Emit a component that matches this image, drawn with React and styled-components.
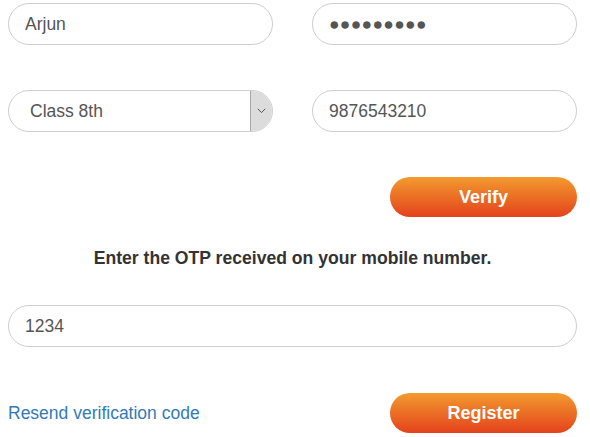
import React from "react";
import styled, { createGlobalStyle } from "styled-components";

const GlobalStyle = createGlobalStyle`
  html, body {
    margin: 0;
    padding: 0;
    background: #fff;
    font-family: "Liberation Sans", Arial, sans-serif;
  }
`;

const Page = styled.div`
  width: 569px;
  padding: 3px 13px 0 8px;
`;

const FieldGrid = styled.div`
  display: grid;
  grid-template-columns: 265px 265px;
  column-gap: 39px;
  row-gap: 45px;
`;

const TextField = styled.input`
  box-sizing: border-box;
  width: 100%;
  height: 42px;
  padding: 0 16px;
  border: 1px solid #cfcfcf;
  border-radius: 21px;
  background: #fff;
  color: #555;
  font-family: "Liberation Sans", Arial, sans-serif;
  font-size: 17.5px;
  outline: none;
  letter-spacing: ${(p) => (p.$masked ? "0.3px" : "normal")};
`;

const SelectWrap = styled.div`
  box-sizing: border-box;
  display: flex;
  height: 42px;
  border: 1px solid #cfcfcf;
  border-radius: 21px;
  overflow: hidden;
  background: #fff;
`;

const Select = styled.select`
  flex: 1;
  min-width: 0;
  appearance: none;
  border: none;
  background: transparent;
  padding: 0 0 0 21px;
  color: #555;
  font-family: "Liberation Sans", Arial, sans-serif;
  font-size: 17.5px;
  outline: none;
`;

const SelectArrow = styled.span`
  display: flex;
  align-items: center;
  justify-content: center;
  width: 20px;
  padding-right: 1px;
  background: #dcdcdc;
  border-left: 1px solid #a8a8a8;
  color: #555;
`;

const ActionRow = styled.div`
  display: flex;
  justify-content: ${(p) => p.$justify || "flex-end"};
  align-items: center;
  margin-top: ${(p) => p.$top}px;
`;

const OrangeButton = styled.button`
  width: 187px;
  height: 40px;
  border: none;
  border-radius: 20px;
  background: linear-gradient(to bottom, #f39a2f 0%, #ea6a24 55%, #e4421d 100%);
  color: #fff;
  font-family: "Liberation Sans", Arial, sans-serif;
  font-weight: bold;
  font-size: 18px;
  cursor: pointer;
`;

const Notice = styled.p`
  margin: 31px 0 37px;
  line-height: 20px;
  text-align: center;
  color: #333;
  font-weight: bold;
  font-size: 17.6px;
`;

const ResendLink = styled.a`
  color: #337ab7;
  font-size: 17.5px;
  text-decoration: none;
  cursor: pointer;
`;

function Chevron() {
  return (
    <svg width="9" height="6" viewBox="0 0 9 6" fill="none">
      <path d="M0.8 0.8 L4.5 4.6 L8.2 0.8" stroke="#555" strokeWidth="1" />
    </svg>
  );
}

export default function App() {
  return (
    <>
      <GlobalStyle />
      <Page>
        <FieldGrid>
          <TextField type="text" defaultValue="Arjun" />
          <TextField type="text" $masked defaultValue="●●●●●●●●●" />
          <SelectWrap>
            <Select defaultValue="8">
              <option value="8">Class 8th</option>
              <option value="9">Class 9th</option>
              <option value="10">Class 10th</option>
            </Select>
            <SelectArrow>
              <Chevron />
            </SelectArrow>
          </SelectWrap>
          <TextField type="tel" defaultValue="9876543210" />
        </FieldGrid>

        <ActionRow $top={45}>
          <OrangeButton type="button">Verify</OrangeButton>
        </ActionRow>

        <Notice>Enter the OTP received on your mobile number.</Notice>

        <TextField type="text" defaultValue="1234" />

        <ActionRow $top={46} $justify="space-between">
          <ResendLink>Resend verification code</ResendLink>
          <OrangeButton type="button">Register</OrangeButton>
        </ActionRow>
      </Page>
    </>
  );
}
